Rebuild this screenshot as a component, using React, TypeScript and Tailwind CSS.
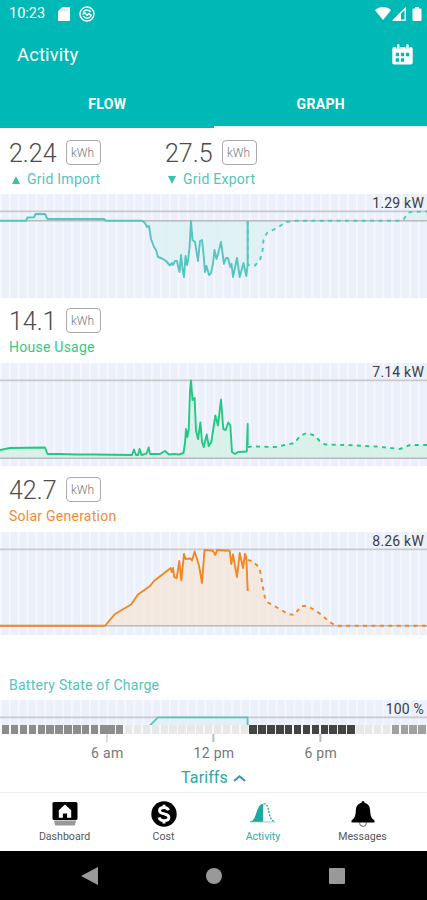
import React from 'react';

const SLOTS = Array.from({ length: 48 }, (_, i) => i);
const SLOT_WIDTH = 427 / 48;

type ChartProps = {
    id: string;
    height: number;
    color: string;
    fill: string;
    limit: string;
    baseline?: number;
    actual: string;
    forecast?: string;
};

const EnergyChart: React.FC<ChartProps> = ({ id, height, color, fill, limit, baseline, actual, forecast }) => {
    const base = baseline ?? height;
    return (
        <div className="relative">
            <svg className="block w-full" height={height} viewBox={`0 0 427 ${height}`}>
                <defs>
                    <pattern id={id} width={SLOT_WIDTH} height={height} patternUnits="userSpaceOnUse">
                        <rect width={SLOT_WIDTH} height={height} fill="#ecf0fa" />
                        <rect width="1.6" height={height} fill="#f7f9fd" />
                    </pattern>
                </defs>
                <rect width="427" height={height} fill={`url(#${id})`} />
                <path d={`M0 ${base} L${actual} V${base} Z`} fill={fill} fillOpacity={0.85} />
                {forecast && <path d={`M247.7 ${base} L${forecast} V${base} Z`} fill={fill} fillOpacity={0.85} />}
                <path d="M0 17.4H427" stroke="#c8c9cd" strokeWidth="1.6" />
                {baseline && <path d={`M0 ${baseline}H427`} stroke="#b9babd" strokeWidth="1.4" />}
                <path d={`M${actual}`} fill="none" stroke={color} strokeWidth="1.9" strokeLinejoin="round" />
                {forecast && (
                    <path d={`M${forecast}`} fill="none" stroke={color} strokeWidth="1.9" strokeDasharray="4 4.4" strokeLinejoin="round" />
                )}
            </svg>
            <span className="absolute right-[3px] top-[1px] text-[14px] leading-4 tracking-[0.2px] text-[#3c3d42]">{limit}</span>
        </div>
    );
};

const Unit = () => (
    <span className="flex h-[25px] w-[35px] items-center justify-center rounded-[4px] border border-[#ababab] pr-[2px] text-[12px] font-light text-[#777]">
        kWh
    </span>
);

const Reading: React.FC<{ value: string }> = ({ value }) => (
    <div className="flex h-[25px] items-center gap-2">
        <span className="w-[49px] pt-px text-[25px] font-light leading-[25px] text-[#4c4c4c]">{value}</span>
        <Unit />
    </div>
);

const StatusBar = () => (
    <div className="flex h-[27px] items-center pl-[9px] pr-[5px] text-white">
        <span className="pt-[2px] text-[14.5px] leading-none">10:23</span>
        <svg className="ml-[13px]" width="12" height="14" viewBox="0 0 12 14" fill="currentColor">
            <path d="M4.3 0H11a1 1 0 0 1 1 1v12a1 1 0 0 1-1 1H1a1 1 0 0 1-1-1V4.3Z" />
            <path d="M4.4 2v2.4M6.8 2v2.4M9.2 2v2.4" stroke="#8fdedb" strokeWidth=".9" />
        </svg>
        <svg className="ml-[9px]" width="16" height="16" viewBox="0 0 16 16" fill="none" stroke="currentColor">
            <circle cx="8" cy="8" r="7" strokeWidth="1.4" />
            <path d="M4.1 6.5A4.2 4.2 0 0 1 11.6 6M12 9.4a4.2 4.2 0 0 1-7.6.8" strokeWidth="1.5" />
            <path d="M3.5 8.5 6 6.8l2 2.4 2-1.6 2.8 2.3" strokeWidth="1.5" />
        </svg>
        <svg className="ml-auto" width="16" height="13" viewBox="0 0 16 13" fill="currentColor">
            <path d="M0 3.3C4.5-1 11.5-1 16 3.3L8 13Z" />
        </svg>
        <svg className="ml-[1px]" width="14" height="14" viewBox="0 0 14 14" fill="none">
            <path d="M1.5 13.2 13.2 1.5v11.7Z" stroke="white" strokeWidth="1.3" />
            <path d="M.5 13.8 9 5v8.8Z" fill="white" />
        </svg>
        <svg className="ml-[6px]" width="10" height="14" viewBox="0 0 10 14" fill="currentColor">
            <path d="M3 0h4v1.5h1.5q1 0 1 1V13q0 1-1 1h-7q-1 0-1-1V2.5q0-1 1-1H3Z" />
        </svg>
    </div>
);

const CalendarIcon = () => (
    <svg className="mb-px" width="21" height="21" viewBox="0 0 21 21">
        <rect x=".3" y="3" width="20.4" height="17.6" rx="1.8" fill="white" />
        <path d="M6.3.6v4M15.5.6v4" stroke="#00b8b5" strokeWidth="4" />
        <path d="M6.3 1.2v3.7M15.5 1.2v3.7" stroke="white" strokeWidth="2.4" strokeLinecap="round" />
        <path d="M3.8 8.8H7v3.4H3.8zM8.9 8.8h3.2v3.4H8.9zM14 8.8h3.2v3.4H14zM3.8 14.3H7v3.4H3.8zM8.9 14.3h3.2v3.4H8.9z" fill="#00b8b5" />
    </svg>
);

const DashboardIcon = () => (
    <svg width="26" height="24" viewBox="0 0 26 24">
        <rect x=".5" width="25" height="18" rx="1.5" />
        <path d="M2 18.5h22l-1 4.5q0 .5-1 .5H4q-1 0-1-.5Z" fill="#999" />
        <path d="m13 2.6 6.2 5.6V15.8h-4.1v-4.200h-4.200v4.200H6.800V8.200Z" fill="white" />
    </svg>
);

const CostIcon = () => (
    <svg width="26" height="26" viewBox="0 0 26 26">
        <circle cx="13" cy="13" r="12.7" />
        <path
            d="M17.5 9.2C16.9 7.5 15.2 6.5 13 6.5c-2.7 0-4.5 1.3-4.5 3.2 0 4.3 9.4 2.2 9.4 6.5 0 2-1.9 3.4-4.7 3.4-2.7 0-4.6-1.2-5.1-3.3M13 3.8v3M13 19.2v3.2"
            fill="none"
            stroke="white"
            strokeWidth="2.9"
        />
    </svg>
);

const ActivityIcon = () => (
    <svg className="-mt-[2px]" width="26" height="20" viewBox="0 0 26 20">
        <path d="M0 18.5C7.5 17.5 5.5 1.2 13.2.7V19H0Z" fill="#1fa9a4" />
        <path d="M13.5.9h1.2C20.5 1.6 17 17.5 25 18.4" fill="none" stroke="#1fa9a4" strokeWidth="1.3" strokeDasharray="2 1.3" />
        <path d="M0 18.9h25" stroke="#65c9c4" strokeWidth=".8" />
    </svg>
);

const BellIcon = () => (
    <svg className="mt-px" width="24" height="27" viewBox="0 0 24 27">
        <circle cx="12" cy="22" r="3.4" fill="white" stroke="#666" />
        <path d="M12 0q1.5 0 1.7 2.1C17.3 2.8 18.9 5.5 19.1 9c.3 5.8 1.1 8.2 4.4 10.4V21.500H.5v-2.100C3.800 17.200 4.600 14.800 4.900 9c.2-3.500 1.800-6.200 5.400-6.900Q10.500 0 12 0Z" />
    </svg>
);

const NAV = [
    { label: 'Dashboard', icon: <DashboardIcon /> },
    { label: 'Cost', icon: <CostIcon /> },
    { label: 'Activity', icon: <ActivityIcon />, active: true },
    { label: 'Messages', icon: <BellIcon /> },
];

const tariffColor = (i: number) => {
    if (i < 14) return 'bg-[#8d8d8d]';
    if (i > 43) return 'bg-[#a0a0a0]';
    if (i > 27 && i < 40) return 'bg-[#444]';
    return 'bg-[#e8e8e8]';
};

const App: React.FC = () => {
    return (
        <div className="flex h-[900px] w-[427px] flex-col overflow-hidden bg-white font-['Roboto',sans-serif]">
            {/* Header */}
            <header className="h-32 shrink-0 bg-[#00b8b5] text-white">
                <StatusBar />
                <div className="flex h-[55px] items-center justify-between pl-[17px] pr-[14px]">
                    <h1 className="pt-px text-[18.5px] leading-none tracking-[0.1px]">Activity</h1>
                    <CalendarIcon />
                </div>
                <div className="grid h-[46px] grid-cols-2 text-center text-[14px] font-bold leading-[43px] tracking-[0.3px]">
                    <div className="pl-px pt-px">FLOW</div>
                    <div className="border-b-2 border-[#eefafa] pl-px pt-px">GRAPH</div>
                </div>
            </header>

            {/* Grid */}
            <section className="h-[169px] shrink-0">
                <div className="flex h-[66px] pl-[9px] pt-3">
                    <div className="w-[156px]">
                        <Reading value="2.24" />
                        <p className="mt-[5px] flex items-center text-[14px] leading-[18px] tracking-[0.25px] text-[#54c5ba]">
                            <svg className="ml-[3px] mr-[7px] mt-px" width="8" height="8" viewBox="0 0 8 8"><path d="M4 0l4 8H0Z" fill="#42bdb3" /></svg>
                            Grid Import
                        </p>
                    </div>
                    <div>
                        <Reading value="27.5" />
                        <p className="mt-[5px] flex items-center text-[14px] leading-[18px] tracking-[0.25px] text-[#54c5ba]">
                            <svg className="ml-[3px] mr-[7px] mt-px" width="8" height="8" viewBox="0 0 8 8"><path d="M0 0h8L4 8Z" fill="#42bdb3" /></svg>
                            Grid Export
                        </p>
                    </div>
                </div>
                <EnergyChart
                    id="grid-slots"
                    height={104}
                    color="#55c5bf"
                    fill="#ddf1f3"
                    limit="1.29 kW"
                    baseline={26.8}
                    actual="0 26.8 26 26.8 27.5 23.5 34 23.3 35.5 20 45 20 47.5 25 104 25 106 26.8 142 26.8 145 29 147 33 149 32 151 45 154 53 156 56 158 63 162 64.5 166 67 170 71.5 172 69 173 71 175 67 177 67 178 72 179.5 78 181 61 182.5 75 184 83 185.5 62 187 71 188 67 189.5 54 191 27 192.5 46 195 48 198 67 200 47 202 46 203.5 60 205 78 206.5 72 209 81 211 79 213 70 214.5 56 216.5 65 218 60 221 48 224 70 226 64 228 64 230.3 73 231.5 70 233 83 237 64 239.7 83 243.5 69 246.3 82 247.7 71 247.7 27"
                    forecast="247.7 27 247.7 71 255 71.5 260 66 262.5 57 263.5 46 267 39 273 36 280 32 286 28 296 26.8 400 26.8 403 26 406 22 410 18 427 17.4"
                />
            </section>

            {/* House */}
            <section className="h-[169px] shrink-0">
                <div className="h-[65.5px] pl-[9px] pt-[11px]">
                    <Reading value="14.1" />
                    <p className="mt-[5px] text-[14px] leading-[18px] tracking-[0.25px] text-[#35c987]">House Usage</p>
                </div>
                <EnergyChart
                    id="house-slots"
                    height={103.5}
                    color="#24c882"
                    fill="#d6f1e6"
                    limit="7.14 kW"
                    baseline={95.3}
                    actual="0 87 10 85 45 84.5 47.5 91 60 91 75 91.5 95 91.5 132 92 134 86.5 136 92 138 92 139.6 86 141.5 92 146.5 90.5 148.7 84.5 150 91 160 91 165 88 169 91.5 174 91 179 91.5 183.5 90 185 80 186 66 187.3 74 188.7 67 190 27.5 191 17.5 192.5 37 194.6 35 196 67.5 198 76 200.4 59.5 202 79 203.7 84 206.7 71.5 208.7 83 211.3 79 213.3 66 215.3 52.5 218 62.5 221 36.5 223.3 66 225.7 67 228.3 59.5 230.3 62 232 89 235 91 238 89 246.7 88.5 247.7 61 247.7 82"
                    forecast="247.7 84 253 83.5 275 84 294.7 80 300 73 306.5 70 314.7 72.5 319.7 78 325 81.5 346 82 376 83.5 400 86 410 82 427 82"
                />
            </section>

            {/* Solar */}
            <section className="h-[169px] shrink-0">
                <div className="h-[65.5px] pl-[9px] pt-[11px]">
                    <Reading value="42.7" />
                    <p className="mt-[5px] text-[14px] leading-[18px] tracking-[0.25px] text-[#f38b36]">Solar Generation</p>
                </div>
                <EnergyChart
                    id="solar-slots"
                    height={103.5}
                    color="#f38724"
                    fill="#f5e6db"
                    limit="8.26 kW"
                    baseline={93.8}
                    actual="0 93.8 105 93.8 115 82 131 72.5 138 62.5 150 54 154 49 163 42 170.7 36 172 40 173 36 174.3 45 176.7 46 179.3 29 181.3 48.5 184 22 185.5 27 190.5 26.5 192 28.5 194.7 19.5 199 33.5 202 51 204.5 18 211.5 18.5 213 19 215.3 23 217 18 229.7 18.8 231.3 32 233 22.5 237 45 239.7 21 243 36 245 22 246.3 25 247.7 59"
                    forecast="247.7 28 252.3 29 259.7 36 262.3 52 264.7 64.5 267 70 279.7 77 288 82 294 83 301.3 74 306.3 74 313 77 321.3 82.5 329.7 90 336 93.8 427 93.8"
                />
            </section>

            {/* Battery */}
            <section className="h-[99px] shrink-0 pt-[41px]">
                <p className="h-6 pl-[9px] text-[14px] leading-[18px] tracking-[0.25px] text-[#54c5ba]">Battery State of Charge</p>
                <EnergyChart
                    id="battery-slots"
                    height={25}
                    color="#54c9c4"
                    fill="#def2f4"
                    limit="100 %"
                    actual="150 25.5 158 17.4 247.5 17.4 247.7 25"
                />
                <div className="flex h-[9px] bg-[#f8f8f9] pl-[2px]">
                    {SLOTS.map((i) => (
                        <div key={i} className={`h-full flex-1 ${i === 11 ? 'mr-0' : 'mr-[1.5px]'} ${tariffColor(i)}`} />
                    ))}
                </div>
            </section>

            {/* Time axis */}
            <div className="grid shrink-0 grid-cols-4 text-[14px] text-[#777]">
                {['6 am', '12 pm', '6 pm'].map((t) => (
                    <div key={t} className="flex translate-x-1/2 flex-col items-center">
                        <span className="h-2 w-[1.5px] bg-[#bbb]" />
                        <span className="mt-[3px] pl-px leading-4 tracking-[0.3px]">{t}</span>
                    </div>
                ))}
            </div>

            <button className="mt-[7px] flex h-5 shrink-0 items-center justify-center gap-[5px] text-[16px] leading-5 tracking-[0.1px] text-[#2ba9a6]">
                Tariffs
                <svg width="13" height="8" viewBox="0 0 13 8" fill="none"><path d="m1 7 5.5-4.8L12 7" stroke="#368fbd" strokeWidth="1.9" /></svg>
            </button>

            {/* Bottom navigation */}
            <nav className="mt-auto grid h-[59px] shrink-0 grid-cols-[99px_99px_100px_99px] justify-center border-t border-[#eee]">
                {NAV.map(({ label, icon, active }) => (
                    <div key={label} className="flex flex-col items-center pt-[7px]">
                        <div className="flex h-[27px] items-center">{icon}</div>
                        <span className={`mt-[3px] text-[10.6px] leading-[14px] ${active ? 'text-[#30aaa5]' : 'text-[#555]'}`}>
                            {label}
                        </span>
                    </div>
                ))}
            </nav>
            <div className="flex h-[49px] shrink-0 items-center bg-black pl-[81px]">
                <svg width="17" height="18" viewBox="0 0 17 18"><path d="M0 9 17 0v18Z" fill="#999" /></svg>
                <div className="ml-[108px] size-4 rounded-full bg-[#999]" />
                <div className="ml-[107px] size-4 rounded-[1px] bg-[#999]" />
            </div>
        </div>
    );
};

export default App;
